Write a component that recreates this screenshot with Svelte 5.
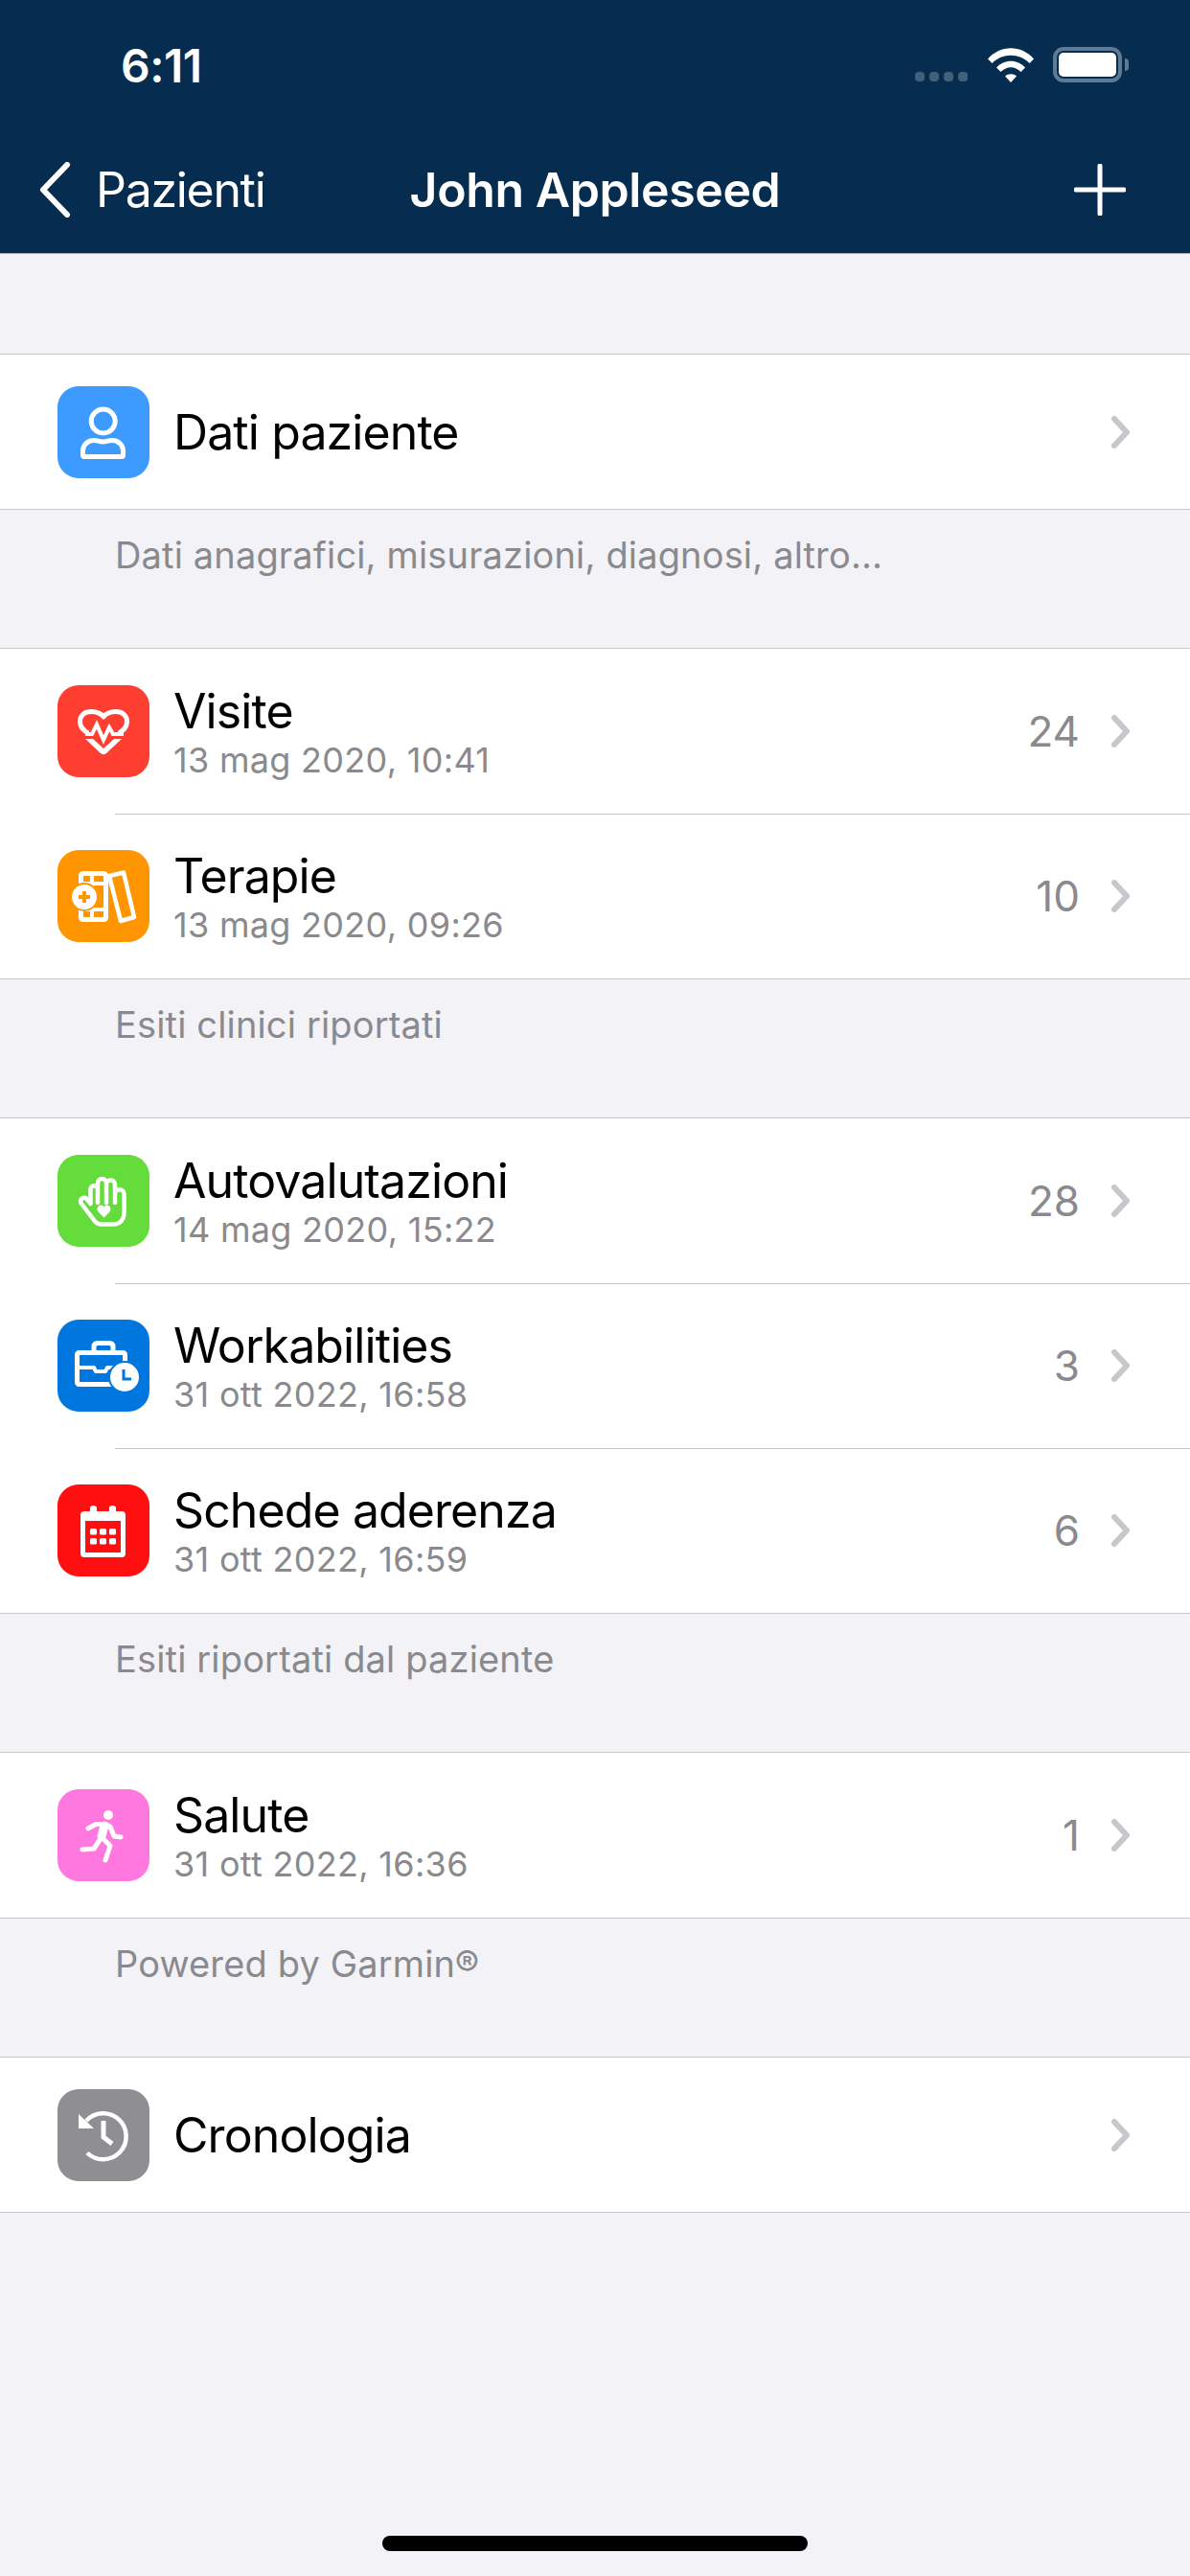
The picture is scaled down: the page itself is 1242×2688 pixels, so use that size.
<script>
  const groups = [
    {
      note: "Dati anagrafici, misurazioni, diagnosi, altro...",
      rows: [{ icon: "person", color: "#3d9bff", title: "Dati paziente" }],
    },
    {
      note: "Esiti clinici riportati",
      rows: [
        { icon: "heart", color: "#ff3e32", title: "Visite", sub: "13 mag 2020, 10:41", count: 24 },
        { icon: "therapy", color: "#ff9500", title: "Terapie", sub: "13 mag 2020, 09:26", count: 10 },
      ],
    },
    {
      note: "Esiti riportati dal paziente",
      rows: [
        { icon: "hand", color: "#64dc3c", title: "Autovalutazioni", sub: "14 mag 2020, 15:22", count: 28 },
        { icon: "work", color: "#0076df", title: "Workabilities", sub: "31 ott 2022, 16:58", count: 3 },
        { icon: "calendar", color: "#ff0f0f", title: "Schede aderenza", sub: "31 ott 2022, 16:59", count: 6 },
      ],
    },
    {
      note: "Powered by Garmin®",
      rows: [{ icon: "run", color: "#ff78df", title: "Salute", sub: "31 ott 2022, 16:36", count: 1 }],
    },
    {
      rows: [{ icon: "history", color: "#8e8e93", title: "Cronologia" }],
    },
  ];
</script>

{#snippet glyph(name, color)}
  <svg viewBox="0 0 96 96" width="96" height="96" fill="none" stroke="#fff" stroke-width="5" stroke-linecap="round" stroke-linejoin="round">
    {#if name === "person"}
      <circle cx="47.7" cy="36.5" r="12.5" />
      <path d="M28 73.5H67Q68.5 73.5 68.5 72V68C68.5 60 62 56.5 57 56.5C53 56.5 52 58 47.5 58C43 58 42 56.5 38 56.5C33 56.5 26.5 60 26.5 68V72Q26.5 73.5 28 73.5Z" />
    {:else if name === "heart"}
      <path stroke-linecap="butt" d="M32 50C25 46 23.5 42 23.5 38C23.5 31 29 27.5 35 27.5C40 27.5 45 29 48 33C51 29 56 27.5 61 27.5C67 27.5 72.5 31 72.5 38C72.5 42 71 46 64 50" />
      <path stroke-width="4" stroke-linecap="butt" stroke-linejoin="miter" d="M29 51H36L41 41L48 57L54 44L58 51H69" />
      <path fill="#fff" stroke="none" d="M29 56H37L48 66L59 56H67L51 71Q48 73.500 45 71Z" />
    {:else if name === "therapy"}
      <rect x="24.500" y="24.500" width="26" height="48" rx="2" />
      <path stroke-width="4" d="M36 24V38M36 60V72M26 35H50M26 62H50" />
      <circle cx="28" cy="49" r="15" fill={color} stroke="none" />
      <circle cx="28" cy="49" r="13" fill="#fff" stroke="none" />
      <path stroke={color} stroke-width="4" stroke-linecap="butt" d="M28 43V55M22 49H34" />
      <path stroke-width="4.500" d="M54 27L69 23.500L80 70L66 74L54 27Z" />
    {:else if name === "hand"}
      <path stroke-width="4.500" d="M34.500 51V36a3.750 3.750 0 0 1 7.500 0V50M42 36V29.500a4.500 4.500 0 0 1 9 0V50M51 31a4.500 4.500 0 0 1 9 0V50M60 41a4.750 4.750 0 0 1 9.500 0V60C69.500 67 66 72.500 58 72.500H46C42 72.500 40 71 38 68L25 51a3.500 3.500 0 0 1 5.500-5L34.500 51" />
      <path fill="#fff" stroke="none" d="M48.500 65.500L43 60C40 57 42 52.500 45.500 52.500C47 52.500 48 53.300 48.500 54.500C49 53.300 50 52.500 51.500 52.500C55 52.500 57 57 54 60Z" />
    {:else if name === "work"}
      <rect x="20.500" y="34.500" width="50" height="33" rx="2" />
      <path d="M38 34V28.500Q38 24.500 42 24.500H54Q58 24.500 58 28.500V34" />
      <path stroke-width="4" stroke-linecap="butt" d="M20 50H38L40 54H50L52 50H70" />
      <circle cx="70" cy="60" r="17" fill={color} stroke="none" />
      <circle cx="70" cy="60" r="15" fill="#fff" stroke="none" />
      <path stroke={color} stroke-width="3" stroke-linecap="butt" stroke-linejoin="miter" d="M69 52V62H77" />
    {:else if name === "calendar"}
      <path fill="#fff" stroke="none" fill-rule="evenodd" d="M34 28V24.500Q34 22 37.500 22T41 24.500V28H54V24.500Q54 22 57.500 22T61 24.500V28H67Q71 28 71 32V72Q71 76 67 76H28Q24 76 24 72V32Q24 28 28 28ZM29 38V71H66V38Z" />
      <g fill="#fff" stroke="none">
        {#each [46, 56] as y}
          {#each [34, 44, 54] as x}
            <rect {x} {y} width="7" height="6.500" rx="1.500" />
          {/each}
        {/each}
      </g>
    {:else if name === "run"}
      <circle cx="53" cy="27" r="5" fill="#fff" stroke="none" />
      <path d="M32 41L40 36.500H50L55 39L59 49L66 50" />
      <path stroke-width="9" d="M49 38L46 49" />
      <path d="M46 50L55 59L50 74" />
      <path d="M44 53L38 62L26 63" />
    {:else}
      <path stroke-width="4.500" stroke-linecap="butt" d="M31 66.500A24 24 0 1 0 30 33" />
      <path fill="#fff" stroke="none" d="M22 26V41H38Z" />
      <path stroke-linecap="butt" stroke-linejoin="miter" d="M48 33V50L57 57" />
    {/if}
  </svg>
{/snippet}

<div class="screen">
  <header class="top">
    <div class="status">
      <span class="time">6:11</span>
      <div class="indicators">
        <div class="dots"><i></i><i></i><i></i><i></i></div>
        <svg class="wifi" viewBox="0 0 48 36" width="48" height="36" fill="#fff">
          <path d="M0 11.500C13 -3.500 35 -3.500 48 11.500L43.500 16C33 5 15 5 4.500 16Z" />
          <path d="M9 20.500C17 11.500 31 11.500 39 20.500L34.500 25C28 18.500 20 18.500 13.500 25Z" />
          <path d="M18 29.500C21 26.500 27 26.500 30 29.500L24 36Z" />
        </svg>
        <div class="battery"><div class="cell"></div></div>
        <div class="tip"></div>
      </div>
    </div>
    <nav class="bar">
      <div class="back">
        <svg viewBox="0 0 34 58" width="34" height="58" fill="none" stroke="#fff" stroke-width="6" stroke-linecap="round" stroke-linejoin="round">
          <path d="M30 3L5 29L30 55" />
        </svg>
        <span>Pazienti</span>
      </div>
      <h1>John Appleseed</h1>
      <svg class="plus" viewBox="0 0 54 54" width="54" height="54" stroke="#fff" stroke-width="5" stroke-linecap="round">
        <path d="M27 2V52M2 27H52" />
      </svg>
    </nav>
  </header>

  <main class="content">
    {#each groups as group}
      <section class="group">
        <ul class="rows">
          {#each group.rows as row}
            <li class="row" class:tall={row.sub}>
              <div class="tile" style="background: {row.color}">
                {@render glyph(row.icon, row.color)}
              </div>
              <div class="body">
                <div class="text">
                  <div class="title">{row.title}</div>
                  {#if row.sub}
                    <div class="sub">{row.sub}</div>
                  {/if}
                </div>
                {#if row.count !== undefined}
                  <span class="count">{row.count}</span>
                {/if}
                <svg class="chev" viewBox="0 0 19 34" width="19" height="34" fill="none" stroke="#c7c7cc" stroke-width="6" stroke-linecap="round" stroke-linejoin="round">
                  <path d="M3 3L16 17L3 31" />
                </svg>
              </div>
            </li>
          {/each}
        </ul>
        {#if group.note}
          <p class="note">{group.note}</p>
        {/if}
      </section>
    {/each}
  </main>

  <div class="home"><div class="pill"></div></div>
</div>

<style>
  :global(body) {
    margin: 0;
    background: #f2f2f7;
  }

  .screen {
    display: flex;
    flex-direction: column;
    height: 2688px;
    font-family: Inter, "Liberation Sans", sans-serif;
    color: #000;
    overflow: hidden;
  }

  .top {
    background: #062d4f;
    height: 264px;
    border-bottom: 1px solid #a9adb5;
    color: #fff;
  }

  .status {
    display: flex;
    justify-content: space-between;
    align-items: flex-start;
    height: 132px;
    padding: 40px 64px 0 126px;
    box-sizing: border-box;
  }

  .time {
    font-size: 48px;
    line-height: 58px;
    font-weight: 600;
    letter-spacing: -0.5px;
  }

  .indicators {
    display: flex;
    align-items: flex-start;
    margin-top: 9px;
  }

  .dots {
    display: flex;
    gap: 5px;
    margin: 26px 21px 0 0;
  }

  .dots i {
    width: 10px;
    height: 10px;
    border-radius: 4px;
    background: #446079;
  }

  .wifi {
    margin: 1px 20px 0 0;
  }

  .battery {
    width: 72px;
    height: 37px;
    box-sizing: border-box;
    border: 4px solid #5f7a94;
    border-radius: 11px;
    padding: 2px;
  }

  .cell {
    height: 100%;
    background: #fff;
    border-radius: 5px;
  }

  .tip {
    width: 4px;
    height: 13px;
    margin: 12px 0 0 3px;
    background: #5f7a94;
    border-radius: 0 4px 4px 0;
  }

  .bar {
    display: grid;
    grid-template-columns: 1fr auto 1fr;
    align-items: center;
    height: 132px;
    padding: 0 40px;
  }

  .back {
    display: flex;
    align-items: center;
    gap: 26px;
    font-size: 50px;
    letter-spacing: -1.3px;
  }

  .bar h1 {
    margin: 0;
    font-size: 50px;
    font-weight: 600;
    letter-spacing: -0.4px;
  }

  .plus {
    justify-self: end;
    margin-right: 27px;
  }

  .content {
    padding-top: 104px;
  }

  .group {
    margin-bottom: 76px;
  }

  .rows {
    list-style: none;
    margin: 0;
    padding: 0;
    background: #fff;
    border-top: 1px solid #c6c6c8;
    border-bottom: 1px solid #c6c6c8;
  }

  .row {
    display: flex;
    align-items: center;
    height: 161px;
    padding-left: 60px;
    gap: 25px;
  }

  .row.tall {
    height: 172px;
  }

  .tile {
    flex: none;
    width: 96px;
    height: 96px;
    border-radius: 22px;
  }

  .tile svg {
    display: block;
  }

  .body {
    flex: 1;
    align-self: stretch;
    display: flex;
    align-items: center;
    padding-right: 63px;
  }

  .row + .row {
    position: relative;
  }

  .row + .row::before {
    content: "";
    position: absolute;
    left: 120px;
    right: 0;
    top: 0;
    height: 1px;
    background: #c6c6c8;
  }

  .text {
    flex: 1;
  }

  .title {
    font-size: 50px;
    line-height: 60px;
    letter-spacing: -0.9px;
  }

  .sub {
    font-size: 36px;
    line-height: 42px;
    letter-spacing: 0.3px;
    color: #8a8a8e;
  }

  .count {
    font-size: 44px;
    color: #8a8a8e;
    margin-right: 33px;
  }

  .chev {
    display: block;
  }

  .note {
    margin: 0;
    padding: 26px 60px 0 120px;
    font-size: 38px;
    line-height: 42px;
    letter-spacing: 0.15px;
    color: #8a8a8e;
  }

  .home {
    margin-top: auto;
    display: flex;
    justify-content: center;
    padding-bottom: 26px;
  }

  .pill {
    width: 444px;
    height: 16px;
    border-radius: 8px;
    background: #000;
  }
</style>
